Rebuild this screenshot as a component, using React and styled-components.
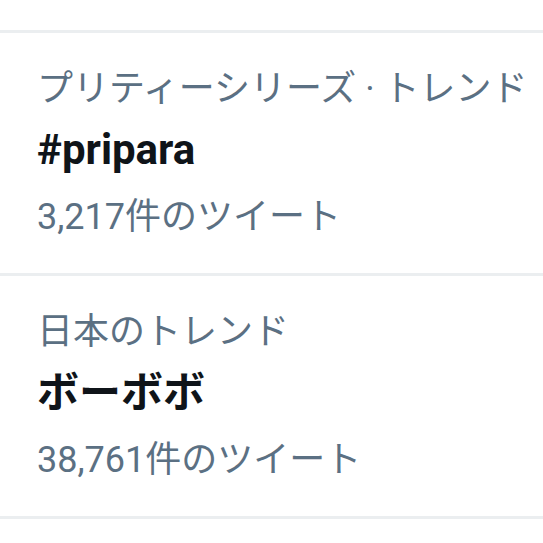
import styled, { createGlobalStyle } from "styled-components";

const GlobalStyle = createGlobalStyle`
  body {
    margin: 0;
    background: #ffffff;
    font-family: Roboto, "Noto Sans CJK JP", sans-serif;
  }
`;

const List = styled.div`
  padding-top: 30px;
`;

const Trend = styled.div`
  height: 240px;
  box-sizing: content-box;
  padding: 0 37px;
  border-top: 3px solid #ebeef0;
  display: flex;
  flex-direction: column;
  justify-content: center;

  &:last-child {
    border-bottom: 3px solid #ebeef0;
  }
`;

const Meta = styled.div`
  font-size: 36px;
  line-height: 48px;
  color: #5b7083;
  white-space: nowrap;
`;

const Name = styled.div`
  font-size: 42px;
  font-weight: 700;
  line-height: 56px;
  color: #0f1419;
  margin: 9px 0 15px;
`;

const trends = [
  { category: "プリティーシリーズ · トレンド", name: "#pripara", count: "3,217" },
  { category: "日本のトレンド", name: "ボーボボ", count: "38,761" },
];

export default function App() {
  return (
    <>
      <GlobalStyle />
      <List>
        {trends.map((t) => (
          <Trend key={t.name}>
            <Meta>{t.category}</Meta>
            <Name>{t.name}</Name>
            <Meta>{t.count}件のツイート</Meta>
          </Trend>
        ))}
      </List>
    </>
  );
}
